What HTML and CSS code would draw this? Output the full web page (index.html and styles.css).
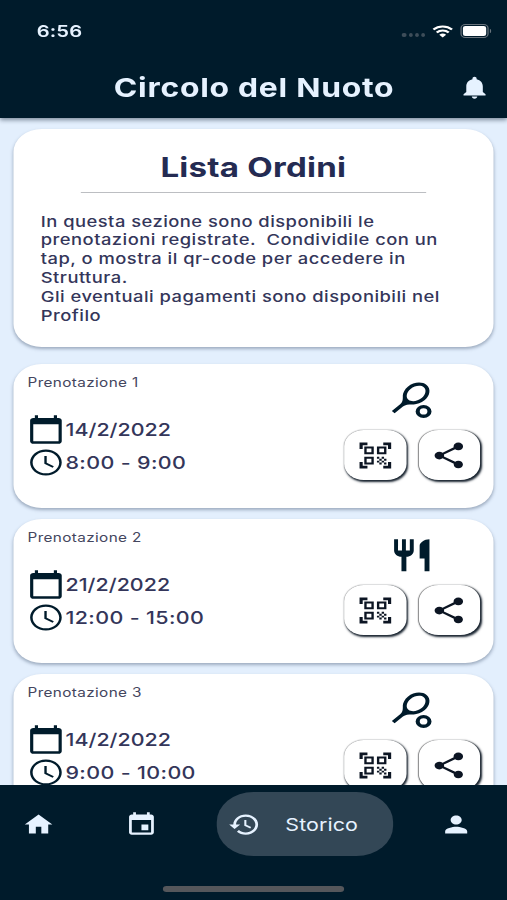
FILE: index.html
```html
<!DOCTYPE html>
<html lang="it">
<head>
<meta charset="utf-8">
<title>Circolo del Nuoto</title>
<link rel="stylesheet" href="styles.css">
</head>
<body>
<svg class="defs" aria-hidden="true">
  <symbol id="calendar" viewBox="0 0 24 24"><path d="M20 3h-1V1h-2v2H7V1H5v2H4c-1.1 0-2 .9-2 2v16c0 1.1.9 2 2 2h16c1.1 0 2-.9 2-2V5c0-1.1-.9-2-2-2zm0 18H4V8h16v13z"/></symbol>
  <symbol id="clock" viewBox="0 0 24 24"><path d="M11.99 2C6.47 2 2 6.48 2 12s4.47 10 9.99 10C17.52 22 22 17.52 22 12S17.52 2 11.99 2zM12 20.400c-4.640 0-8.400-3.760-8.400-8.400s3.760-8.400 8.400-8.400 8.400 3.760 8.400 8.400-3.760 8.400-8.400 8.400zm.5-13.400H11v6l5.250 3.150.75-1.230-4.500-2.670z"/></symbol>
  <symbol id="tennis" viewBox="0 0 24 24"><path d="M19.52 2.49c-2.34-2.34-6.62-1.87-9.55 1.06-1.6 1.6-2.52 3.87-2.54 5.46-.02 1.58.26 3.89-1.35 5.5l-4.24 4.24 1.42 1.42 4.24-4.24c1.61-1.61 3.92-1.33 5.5-1.35s3.86-.94 5.46-2.54c2.92-2.93 3.4-7.21 1.06-9.55zm-9.2 9.19c-1.53-1.53-1.05-4.61 1.06-6.72s5.18-2.59 6.72-1.06c1.53 1.53 1.05 4.61-1.06 6.72s-5.18 2.59-6.72 1.06z"/><circle cx="18" cy="19" r="3" fill="none" stroke="currentColor" stroke-width="2.1"/></symbol>
  <symbol id="restaurant" viewBox="0 0 24 24"><path d="M11 9H9V2H7v7H5V2H3v7c0 2.12 1.66 3.84 3.75 3.97V22h2.5v-9.03C11.34 12.84 13 11.12 13 9V2h-2v7zm5-3v8h2.5v8H21V2c-2.76 0-5 2.24-5 4z"/></symbol>
  <symbol id="qr" viewBox="0 0 24 24"><path d="M9.5 6.5v3h-3v-3h3M11 5H5v6h6V5zm-1.500 9.500v3h-3v-3h3M11 13H5v6h6v-6zm6.500-6.500v3h-3v-3h3M19 5h-6v6h6V5zm-6 8h1.500v1.500H13V13zm1.500 1.500H16V16h-1.500v-1.500zM16 13h1.500v1.500H16V13zm-3 3h1.500v1.500H13V16zm1.500 1.500H16V19h-1.500v-1.500zM16 16h1.500v1.500H16V16zm1.500-1.500H19V16h-1.500v-1.500zm0 3H19V19h-1.500v-1.500zM22 7h-2V4h-3V2h5v5zm0 15v-5h-2v3h-3v2h5zM2 22h5v-2H4v-3H2v5zM2 2v5h2V4h3V2H2z"/></symbol>
  <symbol id="share" viewBox="0 0 24 24"><path d="M18 16.080c-.76 0-1.440.3-1.960.77L8.910 12.700c.05-.23.09-.46.09-.7s-.04-.47-.09-.7l7.050-4.110c.54.5 1.250.81 2.040.81 1.660 0 3-1.340 3-3s-1.340-3-3-3-3 1.340-3 3c0 .24.04.47.09.7L8.040 9.810C7.500 9.310 6.790 9 6 9c-1.660 0-3 1.340-3 3s1.340 3 3 3c.79 0 1.500-.31 2.040-.81l7.120 4.160c-.05.21-.08.43-.08.65 0 1.610 1.310 2.920 2.920 2.920s2.920-1.310 2.920-2.920-1.310-2.920-2.920-2.920z"/></symbol>
  <symbol id="bell" viewBox="0 0 24 24"><path d="M12 22c1.100 0 2-.9 2-2h-4c0 1.100.89 2 2 2zm6-6v-5c0-3.070-1.640-5.640-4.500-6.320V4c0-.83-.67-1.500-1.500-1.500s-1.500.67-1.500 1.500v.68C7.630 5.360 6 7.920 6 11v5l-2 2v1h16v-1l-2-2z"/></symbol>
  <symbol id="home" viewBox="0 0 24 24"><path d="M10 20v-6h4v6h5v-8h3L12 3 2 12h3v8z"/></symbol>
  <symbol id="event" viewBox="0 0 24 24"><path d="M17 12h-5v5h5v-5zM16 1v2H8V1H6v2H5c-1.110 0-1.990.9-1.990 2L3 19c0 1.100.89 2 2 2h14c1.100 0 2-.9 2-2V5c0-1.100-.9-2-2-2h-1V1h-2zm3 18H5V8h14v11z"/></symbol>
  <symbol id="history" viewBox="0 0 24 24"><path d="M13 3c-4.970 0-9 4.030-9 9H1l3.890 3.890.07.14L9 12H6c0-3.870 3.130-7 7-7s7 3.130 7 7-3.130 7-7 7c-1.930 0-3.680-.79-4.940-2.060l-1.420 1.420C8.270 19.990 10.510 21 13 21c4.970 0 9-4.030 9-9s-4.030-9-9-9zm-1 5v5l4.280 2.540.72-1.210-3.500-2.080V8H12z"/></symbol>
  <symbol id="person" viewBox="0 0 24 24"><path d="M12 12c2.210 0 4-1.790 4-4s-1.790-4-4-4-4 1.790-4 4 1.790 4 4 4zm0 2c-2.670 0-8 1.340-8 4v2h16v-2c0-2.660-5.330-4-8-4z"/></symbol>
</svg>
<div class="app">
  <header class="header">
    <div class="status">
      <span class="time">6:56</span>
      <div class="signals">
        <span class="dots"><i></i><i></i><i></i><i></i></span>
        <svg class="wifi" viewBox="0 0 17 13"><path d="M.9 4.500a11 11 0 0 1 15.200 0M3.600 7.500a7.100 7.100 0 0 1 9.800 0"/><path class="tip" d="M8.500 12.600 5.700 9.800a4 4 0 0 1 5.600 0z"/></svg>
        <span class="battery"><i></i></span>
      </div>
    </div>
    <div class="toolbar">
      <h1>Circolo del Nuoto</h1>
      <svg class="icon bell"><use href="#bell"/></svg>
    </div>
  </header>
  <main class="content">
    <section class="card intro">
      <h2>Lista Ordini</h2>
      <hr>
      <p>In questa sezione sono disponibili le
prenotazioni registrate.  Condividile con un
tap, o mostra il qr-code per accedere in
Struttura.
Gli eventuali pagamenti sono disponibili nel
Profilo</p>
    </section>
    <article class="card order">
      <div class="details">
        <h3>Prenotazione 1</h3>
        <div class="row"><svg class="icon"><use href="#calendar"/></svg><span>14/2/2022</span></div>
        <div class="row hours"><svg class="icon"><use href="#clock"/></svg><span>8:00 - 9:00</span></div>
      </div>
      <div class="side">
        <svg class="icon kind"><use href="#tennis"/></svg>
        <div class="actions">
          <button><svg class="icon"><use href="#qr"/></svg></button>
          <button><svg class="icon"><use href="#share"/></svg></button>
        </div>
      </div>
    </article>
    <article class="card order">
      <div class="details">
        <h3>Prenotazione 2</h3>
        <div class="row"><svg class="icon"><use href="#calendar"/></svg><span>21/2/2022</span></div>
        <div class="row hours"><svg class="icon"><use href="#clock"/></svg><span>12:00 - 15:00</span></div>
      </div>
      <div class="side">
        <svg class="icon kind"><use href="#restaurant"/></svg>
        <div class="actions">
          <button><svg class="icon"><use href="#qr"/></svg></button>
          <button><svg class="icon"><use href="#share"/></svg></button>
        </div>
      </div>
    </article>
    <article class="card order">
      <div class="details">
        <h3>Prenotazione 3</h3>
        <div class="row"><svg class="icon"><use href="#calendar"/></svg><span>14/2/2022</span></div>
        <div class="row hours"><svg class="icon"><use href="#clock"/></svg><span>9:00 - 10:00</span></div>
      </div>
      <div class="side">
        <svg class="icon kind"><use href="#tennis"/></svg>
        <div class="actions">
          <button><svg class="icon"><use href="#qr"/></svg></button>
          <button><svg class="icon"><use href="#share"/></svg></button>
        </div>
      </div>
    </article>
  </main>
  <footer class="footer">
    <nav class="nav">
      <a><svg class="icon"><use href="#home"/></svg></a>
      <a><svg class="icon"><use href="#event"/></svg></a>
      <a class="active"><svg class="icon"><use href="#history"/></svg><span>Storico</span></a>
      <a><svg class="icon"><use href="#person"/></svg></a>
    </nav>
    <div class="indicator"></div>
  </footer>
</div>
</body>
</html>
```
FILE: styles.css
```css
* { box-sizing: border-box; margin: 0; padding: 0; }

html, body { width: 507px; height: 900px; overflow: hidden; background: #e3effd; }

.defs { display: none; }

/* 414-unit wide phone layout stretched to the window width */
.app {
  width: 414px;
  height: 900px;
  display: flex;
  flex-direction: column;
  transform: scaleX(1.22464);
  transform-origin: 0 0;
  font-family: Inter, "Liberation Sans", sans-serif;
  color: #34365a;
  background: #e3effd;
}

.icon { display: block; flex: none; width: 31px; height: 31px; fill: currentColor; overflow: visible; }

.header {
  flex: none;
  height: 118px;
  background: #001b2b;
  color: #e6f2ff;
  box-shadow: 0 2px 4px rgba(0, 20, 40, .45);
  z-index: 1;
}

.status { display: flex; justify-content: space-between; height: 57px; padding: 20px 13px 0 30px; }
.time { font-size: 16.500px; font-weight: 600; line-height: 23px; letter-spacing: .1px; }
.signals { display: flex; height: 22px; align-items: center; }
.dots { display: flex; gap: 1.8px; margin: 8px 6px 0 0; }
.dots i { width: 3.3px; height: 4px; border-radius: 50%; background: #3d4d59; }
.wifi { width: 17px; height: 13px; margin-right: 6px; fill: none; stroke: #fff; stroke-width: 2.1; }
.wifi .tip { fill: #fff; stroke: none; }
.battery { position: relative; width: 23px; height: 13.5px; padding: 1.200px; border: 1.200px solid #69747d; border-radius: 4px; margin-right: 2px; }
.battery i { display: block; height: 100%; border-radius: 2px; background: #fff; }
.battery::after { content: ""; position: absolute; right: -3px; top: 4px; width: 1.300px; height: 4px; border-radius: 0 2px 2px 0; background: #69747d; }

.toolbar { display: grid; grid-template-columns: 41px 1fr 40px; align-items: center; height: 61px; }
.toolbar h1 { grid-column: 2; font-size: 26px; font-weight: 700; letter-spacing: .6px; text-align: center; white-space: nowrap; }
.bell { width: 27px; height: 27px; }

.content { flex: 1; min-height: 0; overflow: hidden; padding: 11px 11.500px 0 11.300px; display: flex; flex-direction: column; }

.card { flex: none; background: #fff; border-radius: 23px; box-shadow: 0 2px 3px rgba(30, 50, 80, .35); }

.intro { height: 218px; margin-bottom: 17px; padding: 21px 22px 0; }
.intro h2 { font-size: 27px; line-height: 36px; font-weight: 650; letter-spacing: .2px; text-align: center; color: #242b52; }
.intro hr { height: 1px; border: 0; margin: 5.500px 33px 20px; background: #bcbec2; }
.intro p { font-size: 15px; line-height: 18.900px; font-weight: 500; letter-spacing: .38px; white-space: pre; }

.order { height: 143.500px; margin-bottom: 11.500px; padding: 8px 10.300px 0 11.200px; display: flex; justify-content: space-between; }
.order h3 { font-size: 12.500px; font-weight: 400; line-height: 22px; letter-spacing: .3px; margin-bottom: 19px; color: #44465e; }
.row { display: flex; align-items: center; height: 33px; font-size: 17.500px; font-weight: 450; letter-spacing: 0; white-space: nowrap; }
.hours { letter-spacing: .3px; }
.row .icon { color: #001b2b; }

.side { display: flex; flex-direction: column; align-items: center; color: #001b2b; padding-top: 8.500px; }
.kind { width: 38.500px; height: 38.500px; }
.actions { display: flex; gap: 10px; margin-top: 11px; }
.actions button {
  display: flex;
  align-items: center;
  justify-content: center;
  width: 50.500px;
  height: 50px;
  border: 0;
  border-radius: 16px;
  background: #fff;
  color: #0c1523;
  box-shadow: 1px 1.500px 2px #17222e, 0 0 1px #777;
}

.footer { flex: none; height: 115px; background: #001b2b; color: #e6f2ff; z-index: 1; }
.nav { display: flex; align-items: center; height: 78px; padding-left: 17.500px; }
.nav .icon { width: 27px; height: 27px; }
.nav a + a { margin-left: 57.500px; }
.nav .active { display: flex; align-items: center; gap: 20px; width: 143.500px; height: 64px; padding-left: 9px; border-radius: 30px; background: #334756; font-size: 17.500px; letter-spacing: .05px; }
.nav a + .active { margin-left: 48px; }
.nav .active + a { margin-left: 38px; }
.indicator { width: 148px; height: 6px; margin: 22.500px auto 0; border-radius: 3px; background: #55575b; }
```
